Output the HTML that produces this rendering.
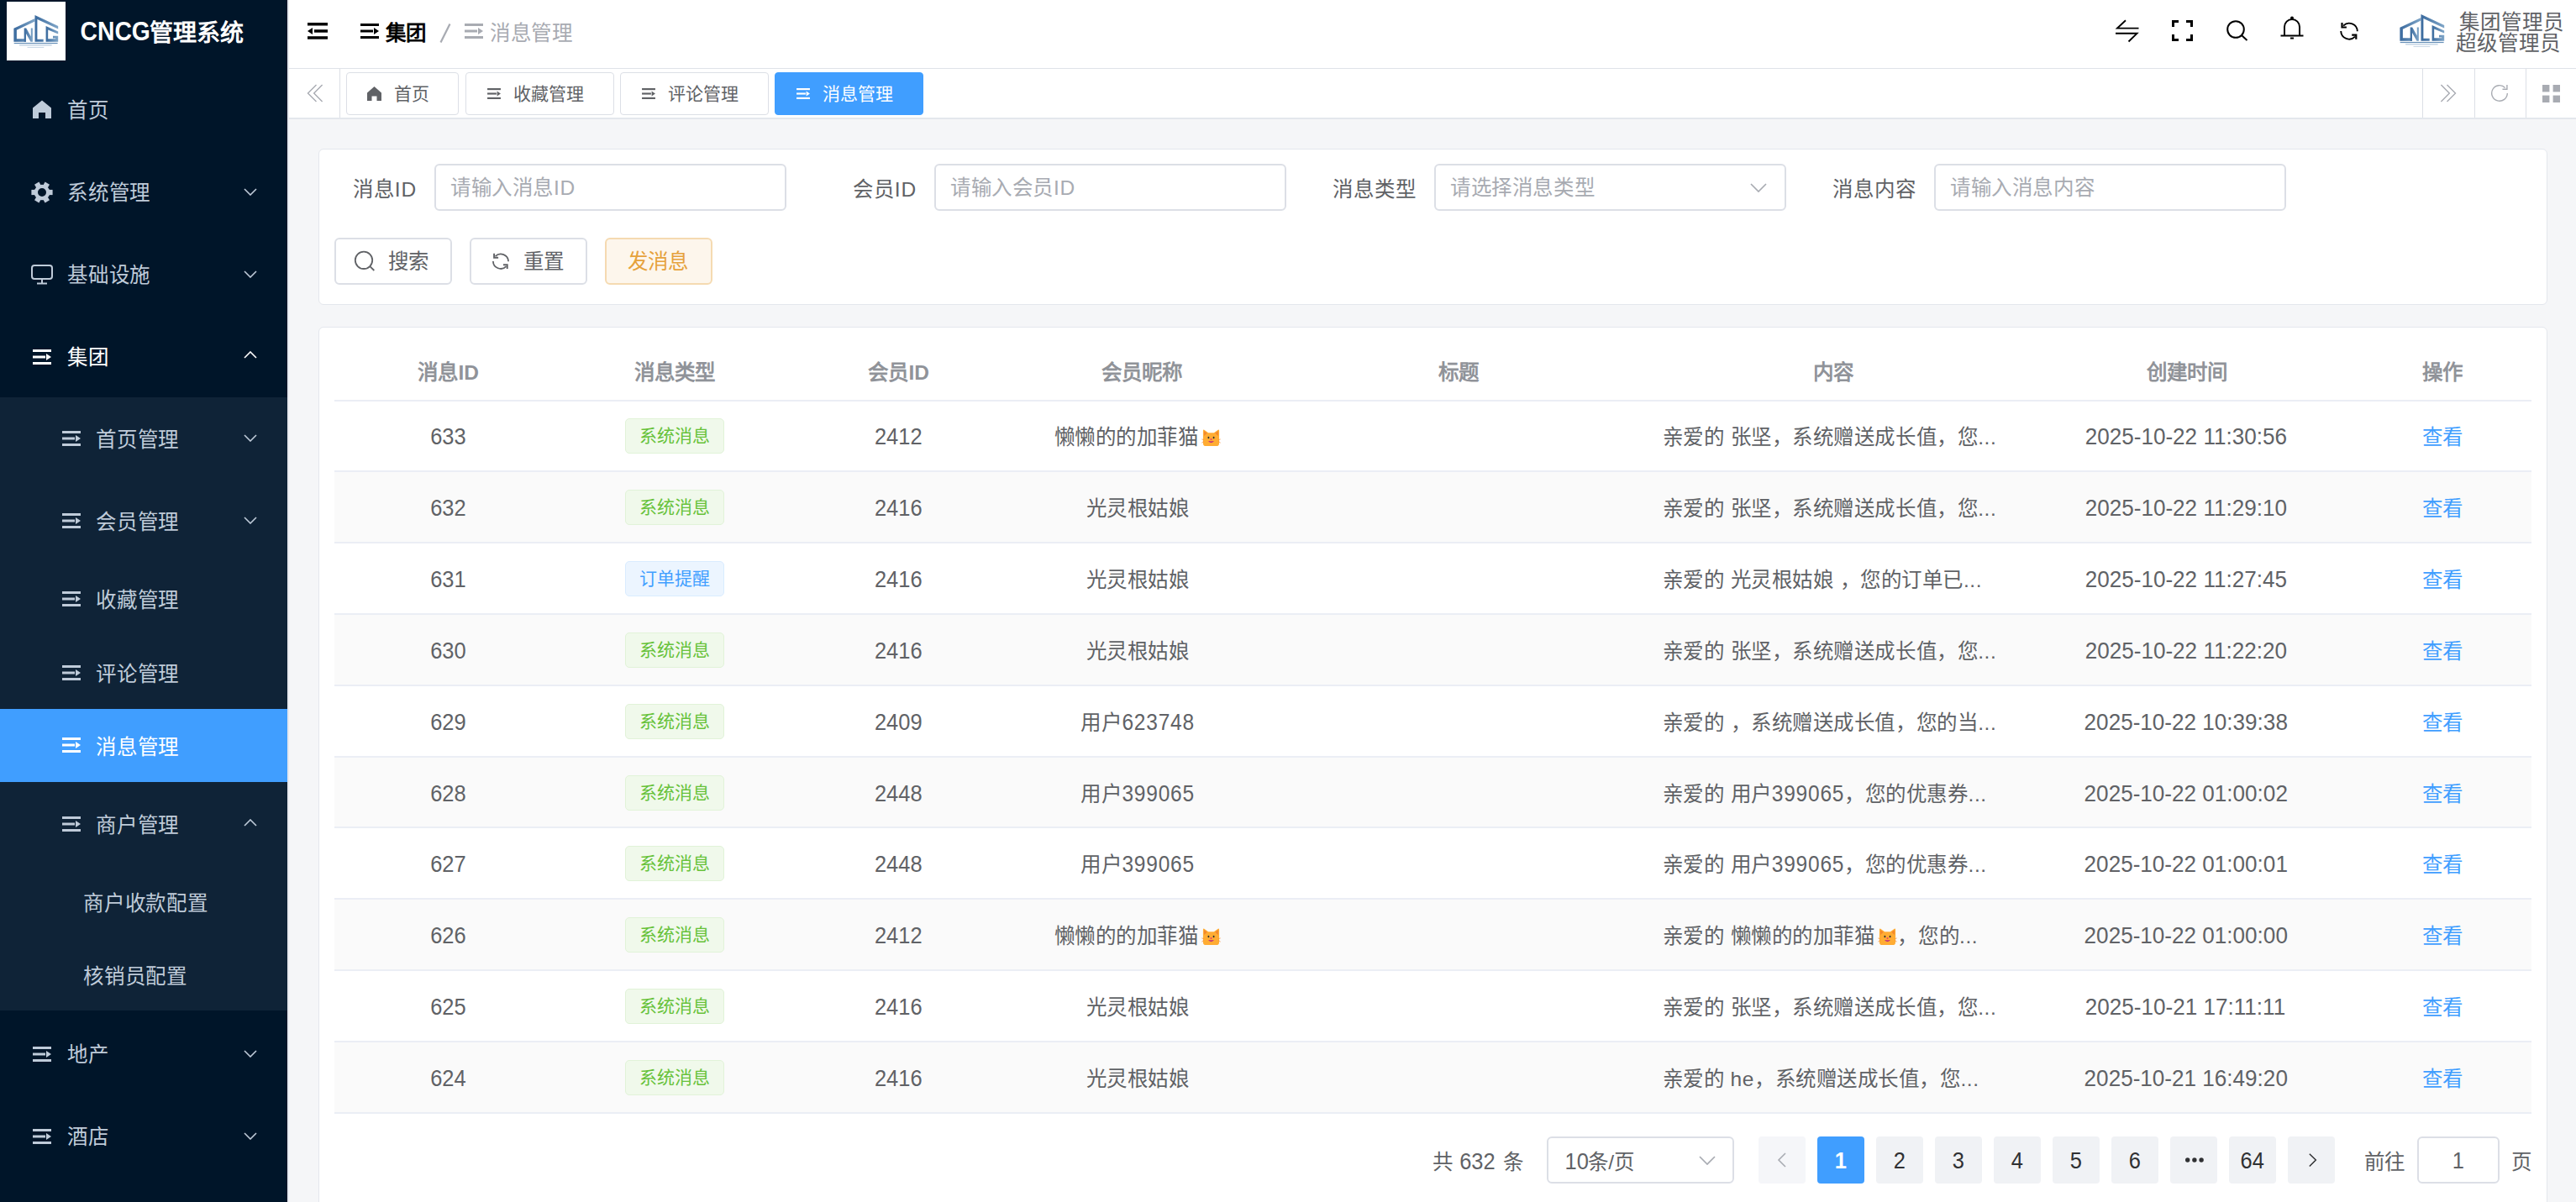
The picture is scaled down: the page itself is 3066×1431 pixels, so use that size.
<!DOCTYPE html>
<html lang="zh-CN"><head><meta charset="utf-8">
<style>
*{box-sizing:border-box;margin:0;padding:0}
html,body{width:3066px;height:1431px;overflow:hidden}
body{font-family:"Liberation Sans",sans-serif;background:#f5f6f8;position:relative;color:#606266}
.abs{position:absolute}
svg{display:block}
/* sidebar */
#side{position:absolute;left:0;top:0;width:342px;height:1431px;background:#001529}
#sideline{position:absolute;left:342px;top:0;width:2px;height:1431px;background:#e6e8ee}
.logo{position:absolute;left:8px;top:2px;width:70px;height:70px;background:#fff}
.brand{position:absolute;left:96px;top:20px;font-size:28px;font-weight:bold;color:#fff;line-height:40px;white-space:nowrap}
.mi{position:absolute;left:0;width:342px;color:#bfcbd9;font-size:24.5px;white-space:nowrap}
.mi .ic{position:absolute}
.mi .tx{position:absolute}
.mi .chev{position:absolute;left:290px}
#sub{position:absolute;left:0;top:473px;width:342px;height:730px;background:#0f2337}
#active{position:absolute;left:0;top:844px;width:342px;height:87px;background:#409eff}
/* header */
#hdr{position:absolute;left:344px;top:0;right:0;height:81px;background:#fff}
#hdrline{position:absolute;left:344px;top:81px;right:0;height:1px;background:#dfe2e8}
#tabs{position:absolute;left:344px;top:82px;right:0;height:58px;background:#fff}
#tabsline{position:absolute;left:344px;top:140px;right:0;height:2px;background:#e4e7ed}
.tab{position:absolute;top:86px;height:51px;border:1px solid #dcdfe6;border-radius:4px;background:#fff;font-size:21px;color:#606266;white-space:nowrap}
.tab.on{background:#409eff;border-color:#409eff;color:#fff}
.vdiv{position:absolute;top:82px;width:1px;height:58px;background:#dcdfe6}
/* cards */
.card{position:absolute;background:#fff;border:1px solid #e4e7ed;border-radius:6px}
.lbl{position:absolute;font-size:24.5px;color:#606266;white-space:nowrap;line-height:30px}
.inp{position:absolute;height:56px;width:419px;border:2px solid #dcdfe6;border-radius:6px;background:#fff;font-size:24.5px;color:#a8abb2;white-space:nowrap}
.btn{position:absolute;top:283px;height:56px;border:2px solid #dcdfe6;border-radius:6px;background:#fff;font-size:24.5px;color:#606266;white-space:nowrap}
/* table */
.th{position:absolute;top:409.5px;height:68px;font-size:24.5px;font-weight:bold;color:#909399;text-align:center;line-height:68px;white-space:nowrap}
.row{position:absolute;left:398px;width:2615px;height:84.9px;border-bottom:2px solid #ebeef5}
.row.s{background:#fafafa}
.td{position:absolute;top:1.5px;height:83px;line-height:83px;font-size:24.5px;color:#606266;text-align:center;white-space:nowrap;overflow:hidden}
.tag{display:inline-block;vertical-align:middle;height:42px;line-height:39px;padding:0 16px;font-size:21px;border:1px solid #e1f3d8;background:#f0f9eb;color:#67c23a;border-radius:5px;margin-top:-6px}
.tag.b{border-color:#d9ecff;background:#ecf5ff;color:#409eff}
.lnk{color:#409eff}
.d{display:inline-block;transform:translateY(-1.2px) scale(1.04,1.14)}
.dt{display:inline-block;transform:translate(-2px,-1.2px) scale(1.065,1.14)}
.pg .d{transform:translateY(1px) scale(1.04,1.14)}
.dn{display:inline-block;letter-spacing:0.8px;transform:translateY(-1.2px) scaleY(1.14)}
.cat{display:inline-block;vertical-align:-3px;margin-left:4px}
/* pagination */
.pg{position:absolute;top:1353px;height:56px;width:56px;background:#f0f2f5;border-radius:4px;font-size:24.5px;color:#303133;text-align:center;line-height:56px}
.pg.on{background:#409eff;color:#fff;font-weight:bold}
</style></head>
<body>
<div id="side">
<div class="logo"><svg width="70" height="70" viewBox="0 0 70 70"><defs><linearGradient id="lg" x1="0" y1="0" x2="1" y2="0"><stop offset="0" stop-color="#3a6a9e"/><stop offset="1" stop-color="#80a6c8"/></linearGradient></defs><g fill="url(#lg)"><path d="M8.4 31.7 L33.5 20 L33.5 23.6 L11.9 33.8 V44.3 H23 V47.8 H8.4 Z"/><path d="M20.7 31.4 H23.2 L28.8 41.5 V31.4 H30.9 V47.8 H28.5 L23 38 V47.8 H20.7 Z"/><path d="M33.5 16 L61.2 29 V32.4 L36.4 20.9 V44.8 H43.7 V47.8 H33.5 Z"/><path d="M46.6 29 L61.2 35.4 V38.6 L49.2 33.4 V44.3 H58.2 V43.4 H55 V40.8 H61.2 V47.8 H46.6 Z"/></g><rect x="8.7" y="48.9" width="51.9" height="1.2" fill="#4d7cab" opacity="0.85"/><rect x="15.1" y="51.3" width="38.5" height="1.1" fill="#7fa2c6" opacity="0.6"/><rect x="24.5" y="53.9" width="19.8" height="1.1" fill="#9ab6d2" opacity="0.5"/></svg></div>
<div class="brand"><span style="display:inline-block;transform:translateY(-2px) scale(1.01,1.14)">CNCG</span>管理系统</div>
<div id="sub"></div>
<div id="active"></div>
<div class="mi" style="top:82px;height:98px;color:#bfcbd9"><div class="tx" style="left:80px;top:1px;line-height:98px;letter-spacing:0.8px">首页</div></div><svg class="abs" style="left:39px;top:119px" width="22" height="22" viewBox="0 0 22 22"><path d="M11 0.5 L22 9.5 V22 H15 V15 H7 V22 H0 V9.5 Z" fill="#bfcbd9"/></svg>
<div class="mi" style="top:180px;height:98px;color:#bfcbd9"><div class="tx" style="left:80px;top:1px;line-height:98px;letter-spacing:0.8px">系统管理</div></div><svg class="abs" style="left:37px;top:216px" width="26" height="26" viewBox="-13 -13 26 26"><g fill="#bfcbd9"><path fill-rule="evenodd" d="M-9.3 0 a9.3 9.3 0 1 0 18.6 0 a9.3 9.3 0 1 0 -18.6 0 Z M-5 0 a5 5 0 1 0 10 0 a5 5 0 1 0 -10 0 Z"/><rect x="-3.1" y="-12.6" width="6.2" height="6" transform="rotate(30)"/><rect x="-3.1" y="-12.6" width="6.2" height="6" transform="rotate(90)"/><rect x="-3.1" y="-12.6" width="6.2" height="6" transform="rotate(150)"/><rect x="-3.1" y="-12.6" width="6.2" height="6" transform="rotate(210)"/><rect x="-3.1" y="-12.6" width="6.2" height="6" transform="rotate(270)"/><rect x="-3.1" y="-12.6" width="6.2" height="6" transform="rotate(330)"/></g></svg><svg class="abs" style="left:290px;top:224.0px" width="16" height="9" viewBox="0 0 16 9"><path d="M1 1 L8.0 8 L15 1" fill="none" stroke="#bfcbd9" stroke-width="1.6"/></svg>
<div class="mi" style="top:278px;height:98px;color:#bfcbd9"><div class="tx" style="left:80px;top:1px;line-height:98px;letter-spacing:0.8px">基础设施</div></div><svg class="abs" style="left:37px;top:315px" width="26" height="24" viewBox="0 0 26 24"><rect x="1" y="1" width="24" height="16" rx="3" fill="none" stroke="#bfcbd9" stroke-width="2"/><path d="M13 17 V22 M7 22.5 H19" stroke="#bfcbd9" stroke-width="2"/></svg><svg class="abs" style="left:290px;top:322.0px" width="16" height="9" viewBox="0 0 16 9"><path d="M1 1 L8.0 8 L15 1" fill="none" stroke="#bfcbd9" stroke-width="1.6"/></svg>
<div class="mi" style="top:376px;height:97px;color:#fff"><div class="tx" style="left:80px;top:1px;line-height:97px;letter-spacing:0.8px">集团</div></div><svg class="abs" style="left:39px;top:416px" width="22" height="18" viewBox="0 0 22 18"><rect x="0" y="0" width="22" height="3" fill="#fff"/><rect x="0" y="7.5" width="15" height="3" fill="#fff"/><path d="M16 5 L22 9 L16 13 Z" fill="#fff"/><rect x="0" y="15" width="22" height="3" fill="#fff"/></svg><svg class="abs" style="left:290px;top:418.0px" width="16" height="9" viewBox="0 0 16 9"><path d="M1 8 L8.0 1 L15 8" fill="none" stroke="#fff" stroke-width="1.6"/></svg>
<div class="mi" style="top:473px;height:98px;color:#bfcbd9"><div class="tx" style="left:114px;top:1.5px;line-height:98px;letter-spacing:0.8px">首页管理</div></div><svg class="abs" style="left:74px;top:513px" width="22" height="18" viewBox="0 0 22 18"><rect x="0" y="0" width="22" height="3" fill="#bfcbd9"/><rect x="0" y="7.5" width="15" height="3" fill="#bfcbd9"/><path d="M16 5 L22 9 L16 13 Z" fill="#bfcbd9"/><rect x="0" y="15" width="22" height="3" fill="#bfcbd9"/></svg><svg class="abs" style="left:290px;top:517.0px" width="16" height="9" viewBox="0 0 16 9"><path d="M1 1 L8.0 8 L15 1" fill="none" stroke="#bfcbd9" stroke-width="1.6"/></svg>
<div class="mi" style="top:571px;height:98px;color:#bfcbd9"><div class="tx" style="left:114px;top:1.5px;line-height:98px;letter-spacing:0.8px">会员管理</div></div><svg class="abs" style="left:74px;top:611px" width="22" height="18" viewBox="0 0 22 18"><rect x="0" y="0" width="22" height="3" fill="#bfcbd9"/><rect x="0" y="7.5" width="15" height="3" fill="#bfcbd9"/><path d="M16 5 L22 9 L16 13 Z" fill="#bfcbd9"/><rect x="0" y="15" width="22" height="3" fill="#bfcbd9"/></svg><svg class="abs" style="left:290px;top:615.0px" width="16" height="9" viewBox="0 0 16 9"><path d="M1 1 L8.0 8 L15 1" fill="none" stroke="#bfcbd9" stroke-width="1.6"/></svg>
<div class="mi" style="top:669px;height:88px;color:#bfcbd9"><div class="tx" style="left:114px;top:1.5px;line-height:88px;letter-spacing:0.8px">收藏管理</div></div><svg class="abs" style="left:74px;top:704px" width="22" height="18" viewBox="0 0 22 18"><rect x="0" y="0" width="22" height="3" fill="#bfcbd9"/><rect x="0" y="7.5" width="15" height="3" fill="#bfcbd9"/><path d="M16 5 L22 9 L16 13 Z" fill="#bfcbd9"/><rect x="0" y="15" width="22" height="3" fill="#bfcbd9"/></svg>
<div class="mi" style="top:757px;height:87px;color:#bfcbd9"><div class="tx" style="left:114px;top:1.5px;line-height:87px;letter-spacing:0.8px">评论管理</div></div><svg class="abs" style="left:74px;top:792px" width="22" height="18" viewBox="0 0 22 18"><rect x="0" y="0" width="22" height="3" fill="#bfcbd9"/><rect x="0" y="7.5" width="15" height="3" fill="#bfcbd9"/><path d="M16 5 L22 9 L16 13 Z" fill="#bfcbd9"/><rect x="0" y="15" width="22" height="3" fill="#bfcbd9"/></svg>
<div class="mi" style="top:844px;height:87px;color:#fff"><div class="tx" style="left:114px;top:1.5px;line-height:87px;letter-spacing:0.8px">消息管理</div></div><svg class="abs" style="left:74px;top:878px" width="22" height="18" viewBox="0 0 22 18"><rect x="0" y="0" width="22" height="3" fill="#fff"/><rect x="0" y="7.5" width="15" height="3" fill="#fff"/><path d="M16 5 L22 9 L16 13 Z" fill="#fff"/><rect x="0" y="15" width="22" height="3" fill="#fff"/></svg>
<div class="mi" style="top:932px;height:98px;color:#bfcbd9"><div class="tx" style="left:114px;top:1.5px;line-height:98px;letter-spacing:0.8px">商户管理</div></div><svg class="abs" style="left:74px;top:972px" width="22" height="18" viewBox="0 0 22 18"><rect x="0" y="0" width="22" height="3" fill="#bfcbd9"/><rect x="0" y="7.5" width="15" height="3" fill="#bfcbd9"/><path d="M16 5 L22 9 L16 13 Z" fill="#bfcbd9"/><rect x="0" y="15" width="22" height="3" fill="#bfcbd9"/></svg><svg class="abs" style="left:290px;top:974.5px" width="16" height="9" viewBox="0 0 16 9"><path d="M1 8 L8.0 1 L15 8" fill="none" stroke="#bfcbd9" stroke-width="1.6"/></svg>
<div class="mi" style="top:1030px;height:88px;color:#bfcbd9"><div class="tx" style="left:99px;top:1.5px;line-height:88px;letter-spacing:0.8px">商户收款配置</div></div>
<div class="mi" style="top:1117.5px;height:87px;color:#bfcbd9"><div class="tx" style="left:99px;top:1.5px;line-height:87px;letter-spacing:0.8px">核销员配置</div></div>
<div class="mi" style="top:1205.5px;height:98px;color:#bfcbd9"><div class="tx" style="left:80px;top:1px;line-height:98px;letter-spacing:0.8px">地产</div></div><svg class="abs" style="left:39px;top:1246px" width="22" height="18" viewBox="0 0 22 18"><rect x="0" y="0" width="22" height="3" fill="#bfcbd9"/><rect x="0" y="7.5" width="15" height="3" fill="#bfcbd9"/><path d="M16 5 L22 9 L16 13 Z" fill="#bfcbd9"/><rect x="0" y="15" width="22" height="3" fill="#bfcbd9"/></svg><svg class="abs" style="left:290px;top:1249.5px" width="16" height="9" viewBox="0 0 16 9"><path d="M1 1 L8.0 8 L15 1" fill="none" stroke="#bfcbd9" stroke-width="1.6"/></svg>
<div class="mi" style="top:1303.5px;height:98px;color:#bfcbd9"><div class="tx" style="left:80px;top:1px;line-height:98px;letter-spacing:0.8px">酒店</div></div><svg class="abs" style="left:39px;top:1344px" width="22" height="18" viewBox="0 0 22 18"><rect x="0" y="0" width="22" height="3" fill="#bfcbd9"/><rect x="0" y="7.5" width="15" height="3" fill="#bfcbd9"/><path d="M16 5 L22 9 L16 13 Z" fill="#bfcbd9"/><rect x="0" y="15" width="22" height="3" fill="#bfcbd9"/></svg><svg class="abs" style="left:290px;top:1347.5px" width="16" height="9" viewBox="0 0 16 9"><path d="M1 1 L8.0 8 L15 1" fill="none" stroke="#bfcbd9" stroke-width="1.6"/></svg>
</div>
<div id="sideline"></div>
<div id="hdr"></div><div id="hdrline"></div>
<svg class="abs" style="left:366px;top:27px" width="24" height="20" viewBox="0 0 24 20"><rect x="0" y="0" width="24" height="3.5" fill="#000"/><rect x="8" y="8.2" width="16" height="3.5" fill="#000"/><path d="M0 10 L6 6 L6 14 Z" fill="#000"/><rect x="0" y="16.2" width="24" height="3.5" fill="#000"/></svg>
<svg class="abs" style="left:429px;top:28px" width="22" height="18" viewBox="0 0 22 18"><rect x="0" y="0" width="22" height="3" fill="#000"/><rect x="0" y="7.5" width="15" height="3" fill="#000"/><path d="M16 5 L22 9 L16 13 Z" fill="#000"/><rect x="0" y="15" width="22" height="3" fill="#000"/></svg>
<div class="abs" style="left:459px;top:20px;font-size:24.5px;font-weight:bold;color:#000;line-height:40px;white-space:nowrap">集团</div>
<svg class="abs" style="left:523px;top:28px" width="14" height="23" viewBox="0 0 14 23"><path d="M12.5 0.5 L1.5 22.5" stroke="#a8abb2" stroke-width="2.2"/></svg>
<svg class="abs" style="left:553px;top:28px" width="22" height="18" viewBox="0 0 22 18"><rect x="0" y="0" width="22" height="3" fill="#a8abb2"/><rect x="0" y="7.5" width="15" height="3" fill="#a8abb2"/><path d="M16 5 L22 9 L16 13 Z" fill="#a8abb2"/><rect x="0" y="15" width="22" height="3" fill="#a8abb2"/></svg>
<div class="abs" style="left:583px;top:20px;font-size:24.5px;color:#a8abb2;line-height:40px;white-space:nowrap;letter-spacing:0.5px">消息管理</div>
<svg class="abs" style="left:2516px;top:23px" width="32" height="28" viewBox="0 0 32 28"><path d="M14 1.3 L4 10.6 H29.5 M2 16.8 H27.5 L17.5 26.5" fill="none" stroke="#000" stroke-width="1.9"/></svg>
<svg class="abs" style="left:2585px;top:24px" width="25" height="25" viewBox="0 0 25 25"><path d="M1.5 8 V1.5 H8 M17 1.5 H23.5 V8 M23.5 17 V23.5 H17 M8 23.5 H1.5 V17" fill="none" stroke="#000" stroke-width="3"/></svg>
<svg class="abs" style="left:2650px;top:24px" width="26" height="25" viewBox="0 0 26 25"><circle cx="11" cy="11" r="9.8" fill="none" stroke="#000" stroke-width="2"/><path d="M18 18 L24.5 24" stroke="#000" stroke-width="2"/></svg>
<svg class="abs" style="left:2714px;top:19px" width="28" height="29" viewBox="0 0 28 29"><path d="M5 23 V13 a9 9 0 0 1 18 0 V23" fill="none" stroke="#000" stroke-width="2"/><path d="M0.5 23.5 H27.5" stroke="#000" stroke-width="2"/><circle cx="14" cy="2.5" r="2" fill="#000"/><path d="M12 26.5 H16" stroke="#000" stroke-width="2"/></svg>
<svg class="abs" style="left:2784px;top:25px" width="24" height="24" viewBox="0 0 24 24"><path d="M5.1 5.6 A9.8 9.8 0 0 1 21.8 12.3" fill="none" stroke="#000" stroke-width="1.9"/><path d="M2.2 12 A9.8 9.8 0 0 0 19 18.6" fill="none" stroke="#000" stroke-width="1.9"/><path d="M3.5 2.1 V7.5 H8.9" fill="none" stroke="#000" stroke-width="2.2"/><path d="M15.2 16.6 H20.3 V21.7" fill="none" stroke="#000" stroke-width="2.2"/></svg>
<div class="abs" style="left:2848px;top:1px;width:70px;height:70px"><svg width="70" height="70" viewBox="0 0 70 70"><defs><linearGradient id="lg2" x1="0" y1="0" x2="1" y2="0"><stop offset="0" stop-color="#3a6a9e"/><stop offset="1" stop-color="#80a6c8"/></linearGradient></defs><g fill="url(#lg2)"><path d="M8.4 31.7 L33.5 20 L33.5 23.6 L11.9 33.8 V44.3 H23 V47.8 H8.4 Z"/><path d="M20.7 31.4 H23.2 L28.8 41.5 V31.4 H30.9 V47.8 H28.5 L23 38 V47.8 H20.7 Z"/><path d="M33.5 16 L61.2 29 V32.4 L36.4 20.9 V44.8 H43.7 V47.8 H33.5 Z"/><path d="M46.6 29 L61.2 35.4 V38.6 L49.2 33.4 V44.3 H58.2 V43.4 H55 V40.8 H61.2 V47.8 H46.6 Z"/></g><rect x="8.7" y="48.9" width="51.9" height="1.2" fill="#4d7cab" opacity="0.85"/><rect x="15.1" y="51.3" width="38.5" height="1.1" fill="#7fa2c6" opacity="0.6"/><rect x="24.5" y="53.9" width="19.8" height="1.1" fill="#9ab6d2" opacity="0.5"/></svg></div>
<div class="abs" style="left:2926.5px;top:13.5px;font-size:24.5px;color:#606266;line-height:26px;white-space:nowrap;letter-spacing:1px">集团管理员</div>
<div class="abs" style="left:2922.5px;top:38.5px;font-size:24.5px;color:#606266;line-height:26px;white-space:nowrap;letter-spacing:1px">超级管理员</div>
<div id="tabs"></div><div id="tabsline"></div>
<svg class="abs" style="left:365px;top:100px" width="20" height="22" viewBox="0 0 20 22"><path d="M18.6 1.1 L8.7 11 L18.6 20.9 M11.5 1.1 L1.5 11 L11.5 20.9" fill="none" stroke="#a8abb2" stroke-width="1.4"/></svg>
<div class="vdiv" style="left:404px"></div>
<div class="tab" style="left:412px;width:134px"></div><svg class="abs" style="left:437px;top:103px" width="17" height="17" viewBox="0 0 17 17"><path d="M8.5 0 L17 7.5 V17 H11.5 V11.5 H5.5 V17 H0 V7.5 Z" fill="#606266"/></svg><div class="abs" style="left:469px;top:96px;font-size:21px;line-height:32px;color:#606266;white-space:nowrap">首页</div>
<div class="tab" style="left:554px;width:177px"></div><svg class="abs" style="left:579.5px;top:105px" width="16" height="13" viewBox="0 0 22 18"><rect x="0" y="0" width="22" height="3" fill="#606266"/><rect x="0" y="7.5" width="15" height="3" fill="#606266"/><path d="M16 5 L22 9 L16 13 Z" fill="#606266"/><rect x="0" y="15" width="22" height="3" fill="#606266"/></svg><div class="abs" style="left:611px;top:96px;font-size:21px;line-height:32px;color:#606266;white-space:nowrap">收藏管理</div>
<div class="tab" style="left:738px;width:177px"></div><svg class="abs" style="left:763.5px;top:105px" width="16" height="13" viewBox="0 0 22 18"><rect x="0" y="0" width="22" height="3" fill="#606266"/><rect x="0" y="7.5" width="15" height="3" fill="#606266"/><path d="M16 5 L22 9 L16 13 Z" fill="#606266"/><rect x="0" y="15" width="22" height="3" fill="#606266"/></svg><div class="abs" style="left:795px;top:96px;font-size:21px;line-height:32px;color:#606266;white-space:nowrap">评论管理</div>
<div class="tab on" style="left:922px;width:177px"></div><svg class="abs" style="left:947.5px;top:105px" width="16" height="13" viewBox="0 0 22 18"><rect x="0" y="0" width="22" height="3" fill="#fff"/><rect x="0" y="7.5" width="15" height="3" fill="#fff"/><path d="M16 5 L22 9 L16 13 Z" fill="#fff"/><rect x="0" y="15" width="22" height="3" fill="#fff"/></svg><div class="abs" style="left:979px;top:96px;font-size:21px;line-height:32px;color:#fff;white-space:nowrap">消息管理</div>
<div class="vdiv" style="left:2883px"></div><div class="vdiv" style="left:2945px"></div><div class="vdiv" style="left:3006px"></div>
<svg class="abs" style="left:2904px;top:100px" width="20" height="22" viewBox="0 0 20 22"><path d="M1.4 1.1 L11.3 11 L1.4 20.9 M8.5 1.1 L18.5 11 L8.5 20.9" fill="none" stroke="#a8abb2" stroke-width="1.4"/></svg>
<svg class="abs" style="left:2964px;top:100px" width="22" height="22" viewBox="0 0 22 22"><path d="M20.3 11 A9.3 9.3 0 1 1 17.6 4.4" fill="none" stroke="#a8abb2" stroke-width="1.4"/><path d="M14.5 6.2 H19.9 V1.1" fill="none" stroke="#a8abb2" stroke-width="1.4"/></svg>
<svg class="abs" style="left:3025.6px;top:100.7px" width="21" height="21" viewBox="0 0 20.5 20.5" fill="#a8abb2"><rect x="0" y="0" width="8.2" height="8.2"/><rect x="12.3" y="0" width="8.2" height="8.2"/><rect x="0" y="12.3" width="8.2" height="8.2"/><rect x="12.3" y="12.3" width="8.2" height="8.2"/></svg>
<div class="card" style="left:379px;top:177px;width:2653px;height:186px"></div>
<div class="lbl" style="left:317px;width:179px;text-align:right;top:210.5px;letter-spacing:0.9px">消息ID</div>
<div class="inp" style="left:517px;top:195px"></div>
<div class="abs" style="left:536px;top:208.5px;font-size:24.5px;line-height:30px;color:#a8abb2;white-space:nowrap;letter-spacing:0.6px">请输入消息ID</div>
<div class="lbl" style="left:912px;width:179px;text-align:right;top:210.5px;letter-spacing:0.9px">会员ID</div>
<div class="inp" style="left:1112px;top:195px"></div>
<div class="abs" style="left:1131px;top:208.5px;font-size:24.5px;line-height:30px;color:#a8abb2;white-space:nowrap;letter-spacing:0.6px">请输入会员ID</div>
<div class="lbl" style="left:1507px;width:179px;text-align:right;top:210.5px;letter-spacing:0.9px">消息类型</div>
<div class="inp" style="left:1707px;top:195px"></div>
<div class="abs" style="left:1726px;top:208.5px;font-size:24.5px;line-height:30px;color:#a8abb2;white-space:nowrap;letter-spacing:0.6px">请选择消息类型</div>
<svg class="abs" style="left:2083px;top:218px" width="20" height="11" viewBox="0 0 20 11"><path d="M1 1 L10.0 10 L19 1" fill="none" stroke="#a8abb2" stroke-width="1.7"/></svg>
<div class="lbl" style="left:2102px;width:179px;text-align:right;top:210.5px;letter-spacing:0.9px">消息内容</div>
<div class="inp" style="left:2302px;top:195px"></div>
<div class="abs" style="left:2321px;top:208.5px;font-size:24.5px;line-height:30px;color:#a8abb2;white-space:nowrap;letter-spacing:0.6px">请输入消息内容</div>
<div class="btn" style="left:398px;width:140px"></div>
<svg class="abs" style="left:421px;top:298px" width="26" height="26" viewBox="0 0 26 26"><circle cx="12" cy="11.8" r="10.2" fill="none" stroke="#606266" stroke-width="1.8"/><path d="M19.3 19.2 L24.3 24" stroke="#606266" stroke-width="1.8"/></svg>
<div class="abs" style="left:462px;top:297px;font-size:24.5px;line-height:30px;color:#606266">搜索</div>
<div class="btn" style="left:559px;width:140px"></div>
<svg class="abs" style="left:584px;top:299px" width="24" height="24" viewBox="0 0 24 24"><g transform="translate(12 12) scale(0.93) translate(-12 -12)"><path d="M5.1 5.6 A9.8 9.8 0 0 1 21.8 12.3" fill="none" stroke="#606266" stroke-width="1.9"/><path d="M2.2 12 A9.8 9.8 0 0 0 19 18.6" fill="none" stroke="#606266" stroke-width="1.9"/><path d="M3.5 2.1 V7.5 H8.9" fill="none" stroke="#606266" stroke-width="2.1"/><path d="M15.2 16.6 H20.3 V21.7" fill="none" stroke="#606266" stroke-width="2.1"/></g></svg>
<div class="abs" style="left:623px;top:297px;font-size:24.5px;line-height:30px;color:#606266">重置</div>
<div class="btn" style="left:720px;width:128px;background:#fdf6ec;border-color:#f5dab1"></div>
<div class="abs" style="left:747px;top:297px;font-size:24.5px;line-height:30px;color:#e6a23c">发消息</div>
<div class="card" style="left:379px;top:389px;width:2653px;height:1100px"></div>
<div class="th" style="left:398px;width:271.4px">消息ID</div>
<div class="th" style="left:669.4px;width:267.80000000000007px">消息类型</div>
<div class="th" style="left:937.2px;width:265.0px">会员ID</div>
<div class="th" style="left:1202.2px;width:313.0px">会员昵称</div>
<div class="th" style="left:1515.2px;width:442.39999999999986px">标题</div>
<div class="th" style="left:1957.6px;width:448.2000000000003px">内容</div>
<div class="th" style="left:2405.8px;width:395.1999999999998px">创建时间</div>
<div class="th" style="left:2801px;width:212px">操作</div>
<div class="abs" style="left:398px;top:476px;width:2615px;height:1.6px;background:#ebeef5"></div>
<div class="row" style="top:477px;height:85px">
<div class="td" style="left:0.0px;width:271.4px;"><span class="d">633</span></div>
<div class="td" style="left:271.4px;width:267.8px;"><span class="tag">系统消息</span></div>
<div class="td" style="left:539.2px;width:265.0px;"><span class="d">2412</span></div>
<div class="td" style="left:804.2px;width:313.0px;padding-right:9px;letter-spacing:0.5px;">懒懒的的加菲猫<svg class="cat" width="23" height="23" viewBox="0 0 24 24"><path d="M3 2.5 L8.5 6.5 H15.5 L21 2.5 Q22 2.5 22 4 V19.5 Q22 23 18.5 23 H5.5 Q2 23 2 19.5 V4 Q2 2.5 3 2.5 Z" fill="#ffac33"/><path d="M3.2 4.2 L7 7 L3.2 10.5 Z M20.8 4.2 L17 7 L20.8 10.5 Z" fill="#f4882c"/><ellipse cx="8.8" cy="12.6" rx="1" ry="1.3" fill="#292f33"/><ellipse cx="15.2" cy="12.6" rx="1" ry="1.3" fill="#292f33"/><ellipse cx="12" cy="14.6" rx="1.1" ry="0.75" fill="#e8157f"/><path d="M8.3 16.6 Q12 21 15.7 16.6 Q12 17.6 8.3 16.6 Z" fill="#b8198a"/><path d="M0.3 14.5 L3 15.3 M0.3 19 L3 17.2 M23.7 14.5 L21 15.3 M23.7 19 L21 17.2" stroke="#f4882c" stroke-width="0.7"/></svg></div>
<div class="td" style="left:1117.2px;width:442.4px;"></div>
<div class="td" style="left:1559.6px;width:448.2px;text-align:left;padding-left:21px;letter-spacing:0.55px;">亲爱的 张坚，系统赠送成长值，您...</div>
<div class="td" style="left:2007.8px;width:395.2px;"><span class="dt">2025-10-22 11:30:56</span></div>
<div class="td" style="left:2403.0px;width:212.0px;"><span class="lnk">查看</span></div>
</div>
<div class="row s" style="top:562px;height:85px">
<div class="td" style="left:0.0px;width:271.4px;"><span class="d">632</span></div>
<div class="td" style="left:271.4px;width:267.8px;"><span class="tag">系统消息</span></div>
<div class="td" style="left:539.2px;width:265.0px;"><span class="d">2416</span></div>
<div class="td" style="left:804.2px;width:313.0px;padding-right:9px;letter-spacing:0.5px;">光灵根姑娘</div>
<div class="td" style="left:1117.2px;width:442.4px;"></div>
<div class="td" style="left:1559.6px;width:448.2px;text-align:left;padding-left:21px;letter-spacing:0.55px;">亲爱的 张坚，系统赠送成长值，您...</div>
<div class="td" style="left:2007.8px;width:395.2px;"><span class="dt">2025-10-22 11:29:10</span></div>
<div class="td" style="left:2403.0px;width:212.0px;"><span class="lnk">查看</span></div>
</div>
<div class="row" style="top:647px;height:85px">
<div class="td" style="left:0.0px;width:271.4px;"><span class="d">631</span></div>
<div class="td" style="left:271.4px;width:267.8px;"><span class="tag b">订单提醒</span></div>
<div class="td" style="left:539.2px;width:265.0px;"><span class="d">2416</span></div>
<div class="td" style="left:804.2px;width:313.0px;padding-right:9px;letter-spacing:0.5px;">光灵根姑娘</div>
<div class="td" style="left:1117.2px;width:442.4px;"></div>
<div class="td" style="left:1559.6px;width:448.2px;text-align:left;padding-left:21px;letter-spacing:0.55px;">亲爱的 光灵根姑娘 ，您的订单已...</div>
<div class="td" style="left:2007.8px;width:395.2px;"><span class="dt">2025-10-22 11:27:45</span></div>
<div class="td" style="left:2403.0px;width:212.0px;"><span class="lnk">查看</span></div>
</div>
<div class="row s" style="top:732px;height:85px">
<div class="td" style="left:0.0px;width:271.4px;"><span class="d">630</span></div>
<div class="td" style="left:271.4px;width:267.8px;"><span class="tag">系统消息</span></div>
<div class="td" style="left:539.2px;width:265.0px;"><span class="d">2416</span></div>
<div class="td" style="left:804.2px;width:313.0px;padding-right:9px;letter-spacing:0.5px;">光灵根姑娘</div>
<div class="td" style="left:1117.2px;width:442.4px;"></div>
<div class="td" style="left:1559.6px;width:448.2px;text-align:left;padding-left:21px;letter-spacing:0.55px;">亲爱的 张坚，系统赠送成长值，您...</div>
<div class="td" style="left:2007.8px;width:395.2px;"><span class="dt">2025-10-22 11:22:20</span></div>
<div class="td" style="left:2403.0px;width:212.0px;"><span class="lnk">查看</span></div>
</div>
<div class="row" style="top:817px;height:85px">
<div class="td" style="left:0.0px;width:271.4px;"><span class="d">629</span></div>
<div class="td" style="left:271.4px;width:267.8px;"><span class="tag">系统消息</span></div>
<div class="td" style="left:539.2px;width:265.0px;"><span class="d">2409</span></div>
<div class="td" style="left:804.2px;width:313.0px;padding-right:9px;letter-spacing:0.5px;">用户<span class="dn">623748</span></div>
<div class="td" style="left:1117.2px;width:442.4px;"></div>
<div class="td" style="left:1559.6px;width:448.2px;text-align:left;padding-left:21px;letter-spacing:0.55px;">亲爱的 ，系统赠送成长值，您的当...</div>
<div class="td" style="left:2007.8px;width:395.2px;"><span class="dt">2025-10-22 10:39:38</span></div>
<div class="td" style="left:2403.0px;width:212.0px;"><span class="lnk">查看</span></div>
</div>
<div class="row s" style="top:902px;height:84px">
<div class="td" style="left:0.0px;width:271.4px;"><span class="d">628</span></div>
<div class="td" style="left:271.4px;width:267.8px;"><span class="tag">系统消息</span></div>
<div class="td" style="left:539.2px;width:265.0px;"><span class="d">2448</span></div>
<div class="td" style="left:804.2px;width:313.0px;padding-right:9px;letter-spacing:0.5px;">用户<span class="dn">399065</span></div>
<div class="td" style="left:1117.2px;width:442.4px;"></div>
<div class="td" style="left:1559.6px;width:448.2px;text-align:left;padding-left:21px;letter-spacing:0.55px;">亲爱的 用户<span class="dn">399065</span>，您的优惠券...</div>
<div class="td" style="left:2007.8px;width:395.2px;"><span class="dt">2025-10-22 01:00:02</span></div>
<div class="td" style="left:2403.0px;width:212.0px;"><span class="lnk">查看</span></div>
</div>
<div class="row" style="top:986px;height:85px">
<div class="td" style="left:0.0px;width:271.4px;"><span class="d">627</span></div>
<div class="td" style="left:271.4px;width:267.8px;"><span class="tag">系统消息</span></div>
<div class="td" style="left:539.2px;width:265.0px;"><span class="d">2448</span></div>
<div class="td" style="left:804.2px;width:313.0px;padding-right:9px;letter-spacing:0.5px;">用户<span class="dn">399065</span></div>
<div class="td" style="left:1117.2px;width:442.4px;"></div>
<div class="td" style="left:1559.6px;width:448.2px;text-align:left;padding-left:21px;letter-spacing:0.55px;">亲爱的 用户<span class="dn">399065</span>，您的优惠券...</div>
<div class="td" style="left:2007.8px;width:395.2px;"><span class="dt">2025-10-22 01:00:01</span></div>
<div class="td" style="left:2403.0px;width:212.0px;"><span class="lnk">查看</span></div>
</div>
<div class="row s" style="top:1071px;height:85px">
<div class="td" style="left:0.0px;width:271.4px;"><span class="d">626</span></div>
<div class="td" style="left:271.4px;width:267.8px;"><span class="tag">系统消息</span></div>
<div class="td" style="left:539.2px;width:265.0px;"><span class="d">2412</span></div>
<div class="td" style="left:804.2px;width:313.0px;padding-right:9px;letter-spacing:0.5px;">懒懒的的加菲猫<svg class="cat" width="23" height="23" viewBox="0 0 24 24"><path d="M3 2.5 L8.5 6.5 H15.5 L21 2.5 Q22 2.5 22 4 V19.5 Q22 23 18.5 23 H5.5 Q2 23 2 19.5 V4 Q2 2.5 3 2.5 Z" fill="#ffac33"/><path d="M3.2 4.2 L7 7 L3.2 10.5 Z M20.8 4.2 L17 7 L20.8 10.5 Z" fill="#f4882c"/><ellipse cx="8.8" cy="12.6" rx="1" ry="1.3" fill="#292f33"/><ellipse cx="15.2" cy="12.6" rx="1" ry="1.3" fill="#292f33"/><ellipse cx="12" cy="14.6" rx="1.1" ry="0.75" fill="#e8157f"/><path d="M8.3 16.6 Q12 21 15.7 16.6 Q12 17.6 8.3 16.6 Z" fill="#b8198a"/><path d="M0.3 14.5 L3 15.3 M0.3 19 L3 17.2 M23.7 14.5 L21 15.3 M23.7 19 L21 17.2" stroke="#f4882c" stroke-width="0.7"/></svg></div>
<div class="td" style="left:1117.2px;width:442.4px;"></div>
<div class="td" style="left:1559.6px;width:448.2px;text-align:left;padding-left:21px;letter-spacing:0.55px;">亲爱的 懒懒的的加菲猫<svg class="cat" width="23" height="23" viewBox="0 0 24 24"><path d="M3 2.5 L8.5 6.5 H15.5 L21 2.5 Q22 2.5 22 4 V19.5 Q22 23 18.5 23 H5.5 Q2 23 2 19.5 V4 Q2 2.5 3 2.5 Z" fill="#ffac33"/><path d="M3.2 4.2 L7 7 L3.2 10.5 Z M20.8 4.2 L17 7 L20.8 10.5 Z" fill="#f4882c"/><ellipse cx="8.8" cy="12.6" rx="1" ry="1.3" fill="#292f33"/><ellipse cx="15.2" cy="12.6" rx="1" ry="1.3" fill="#292f33"/><ellipse cx="12" cy="14.6" rx="1.1" ry="0.75" fill="#e8157f"/><path d="M8.3 16.6 Q12 21 15.7 16.6 Q12 17.6 8.3 16.6 Z" fill="#b8198a"/><path d="M0.3 14.5 L3 15.3 M0.3 19 L3 17.2 M23.7 14.5 L21 15.3 M23.7 19 L21 17.2" stroke="#f4882c" stroke-width="0.7"/></svg>，您的...</div>
<div class="td" style="left:2007.8px;width:395.2px;"><span class="dt">2025-10-22 01:00:00</span></div>
<div class="td" style="left:2403.0px;width:212.0px;"><span class="lnk">查看</span></div>
</div>
<div class="row" style="top:1156px;height:85px">
<div class="td" style="left:0.0px;width:271.4px;"><span class="d">625</span></div>
<div class="td" style="left:271.4px;width:267.8px;"><span class="tag">系统消息</span></div>
<div class="td" style="left:539.2px;width:265.0px;"><span class="d">2416</span></div>
<div class="td" style="left:804.2px;width:313.0px;padding-right:9px;letter-spacing:0.5px;">光灵根姑娘</div>
<div class="td" style="left:1117.2px;width:442.4px;"></div>
<div class="td" style="left:1559.6px;width:448.2px;text-align:left;padding-left:21px;letter-spacing:0.55px;">亲爱的 张坚，系统赠送成长值，您...</div>
<div class="td" style="left:2007.8px;width:395.2px;"><span class="dt">2025-10-21 17:11:11</span></div>
<div class="td" style="left:2403.0px;width:212.0px;"><span class="lnk">查看</span></div>
</div>
<div class="row s" style="top:1241px;height:85px">
<div class="td" style="left:0.0px;width:271.4px;"><span class="d">624</span></div>
<div class="td" style="left:271.4px;width:267.8px;"><span class="tag">系统消息</span></div>
<div class="td" style="left:539.2px;width:265.0px;"><span class="d">2416</span></div>
<div class="td" style="left:804.2px;width:313.0px;padding-right:9px;letter-spacing:0.5px;">光灵根姑娘</div>
<div class="td" style="left:1117.2px;width:442.4px;"></div>
<div class="td" style="left:1559.6px;width:448.2px;text-align:left;padding-left:21px;letter-spacing:0.55px;">亲爱的 he，系统赠送成长值，您...</div>
<div class="td" style="left:2007.8px;width:395.2px;"><span class="dt">2025-10-21 16:49:20</span></div>
<div class="td" style="left:2403.0px;width:212.0px;"><span class="lnk">查看</span></div>
</div>
<div class="abs" style="left:1705px;top:1368.5px;font-size:24.5px;line-height:30px;color:#606266;white-space:nowrap;word-spacing:2.5px">共 <span class="d">632</span> 条</div>
<div class="inp" style="left:1841px;top:1353px;width:223px;color:#606266"></div>
<div class="abs" style="left:1863px;top:1368.5px;font-size:24.5px;line-height:30px;color:#606266;white-space:nowrap"><span class="d">10</span>条/页</div>
<svg class="abs" style="left:2022px;top:1376px" width="20" height="11" viewBox="0 0 20 11"><path d="M1 1 L10.0 10 L19 1" fill="none" stroke="#a8abb2" stroke-width="1.7"/></svg>
<div class="pg" style="left:2093px;background:#f5f6f9"></div>
<svg class="abs" style="left:2115px;top:1372px" width="11" height="18" viewBox="0 0 11 18"><path d="M10 1 L2 9 L10 17" fill="none" stroke="#a8abb2" stroke-width="1.6"/></svg>
<div class="pg on" style="left:2163px"><span class="d">1</span></div>
<div class="pg" style="left:2233px"><span class="d">2</span></div>
<div class="pg" style="left:2303px"><span class="d">3</span></div>
<div class="pg" style="left:2373px"><span class="d">4</span></div>
<div class="pg" style="left:2443px"><span class="d">5</span></div>
<div class="pg" style="left:2513px"><span class="d">6</span></div>
<div class="pg" style="left:2583px"><svg class="abs" style="left:17.5px;top:25px" width="22" height="6" viewBox="0 0 22 6"><circle cx="2.7" cy="3" r="2.7" fill="#303133"/><circle cx="10.9" cy="3" r="2.7" fill="#303133"/><circle cx="19.1" cy="3" r="2.7" fill="#303133"/></svg></div>
<div class="pg" style="left:2653px"><span class="d">64</span></div>
<div class="pg" style="left:2723px"></div>
<svg class="abs" style="left:2747.5px;top:1372.5px" width="10" height="17" viewBox="0 0 10 17"><path d="M0.8 0.8 L8.3 8 L0.8 15.5" fill="none" stroke="#303133" stroke-width="1.5"/></svg>
<div class="abs" style="left:2814px;top:1368.5px;font-size:24.5px;line-height:30px;color:#606266">前往</div>
<div class="inp" style="left:2877px;top:1353px;width:98px"></div>
<div class="abs" style="left:2877px;top:1368px;width:98px;text-align:center;font-size:24.5px;line-height:30px;color:#606266"><span class="d">1</span></div>
<div class="abs" style="left:2989px;top:1368.5px;font-size:24.5px;line-height:30px;color:#606266">页</div>
</body></html>
